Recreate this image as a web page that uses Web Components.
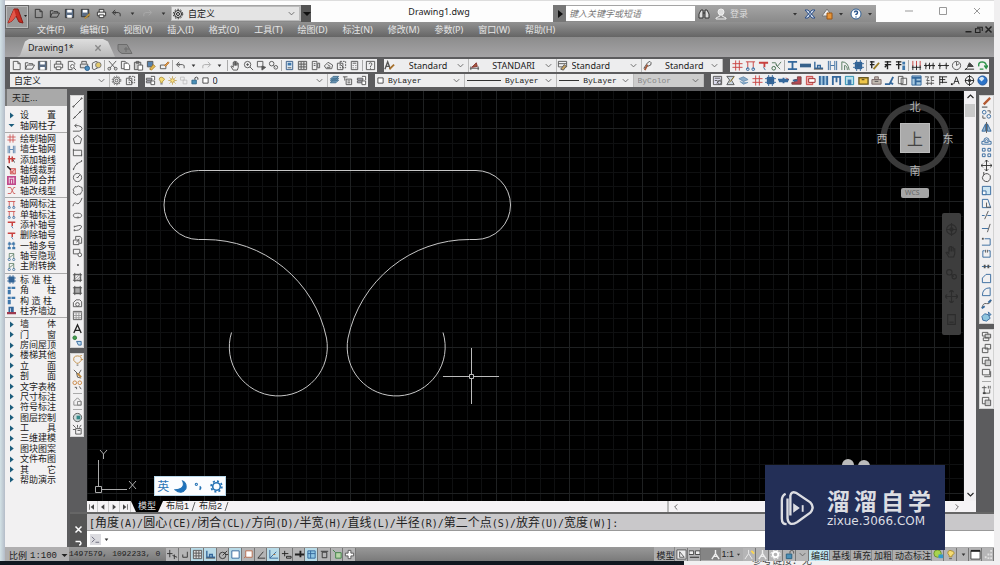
<!DOCTYPE html>
<html lang="zh-CN">
<head>
<meta charset="utf-8">
<title>Drawing1.dwg</title>
<style>
html, body { margin: 0; min-height: 100%; }
body {
  font: 9px/12px "Noto Sans", "Noto Sans CJK SC", sans-serif;
  color: #333; overflow: hidden;
  background: linear-gradient(90deg, #d3e2e6 0, #b4bcc8 5px, #f0eff0 6px);
}
</style>
</head>
<body>
<cad-app></cad-app>
<script>
/* Icons are drawn on a 12 x 12 grid; strokes default to the current colour. */
const R = 'stroke="#c8413f"', B = 'stroke="#34689c"', BF = 'fill="#3f78ac" stroke="none"', KF = 'fill="#444" stroke="none"';
const ICONS = {
  new: '<path d="M2.500 1.500h5l2.500 2.500v6.500h-7.500zM7.500 1.500v2.500h2.500"/>',
  open: '<path d="M1.500 10V3h3l1 1h4v1.500M1.500 10l2-4.500h8L9 10z"/>',
  save: '<path d="M1.500 1.500h9v9h-9z" fill="#5b6d85"/><path d="M3.500 2h5v3h-5zM3.500 7.500h5v3h-5z" fill="#fff" stroke="none"/>',
  saveas: '<path d="M1.500 1.500h8v8h-8z" fill="#5b6d85"/><path d="M3 2h5v3H3z" fill="#fff" stroke="none"/><path d="M5 11l5-5 1 1-5 4.500z" fill="#eac35a" stroke="#a67b2b"/>',
  print: '<path d="M3.500 4.500v-3h5v3M1.500 4.500h9v4h-9z" fill="#eee"/><path d="M3.500 7.500h5v3h-5z" fill="#fff"/>',
  preview: '<path d="M7 10.500H2.500v-9h5l2 2V5"/><circle cx="7" cy="7" r="2" fill="#fff"/><path d="M8.500 8.500l2.500 2.500"/>',
  publish: '<path d="M3 4V1.500h5V4M1.500 4.500h8v4h-8z" fill="#ddd"/><circle cx="9" cy="9" r="2.500" fill="#4b8fc0" stroke="#285f91"/>',
  dwf: '<path d="M1.500 3.500l4-2 2 1v6l-4 2-2-1z" fill="#eee"/><circle cx="8" cy="5.500" r="3" fill="#e2c96c" stroke="#777"/>',
  cut: '<path d="M2 1l7 8M10 1L3 9"/><circle cx="2.500" cy="9.500" r="1.500"/><circle cx="9.500" cy="9.500" r="1.500"/>',
  copy: '<path d="M1.500 1.500h4l2 2v6h-6z"/><path d="M4.500 3.500h4l2 2v5h-6z" fill="#fff"/>',
  paste: '<path d="M1.500 2.500h7v8h-7z" fill="#ccc"/><path d="M3.500 1.500h3v2h-3z"/><path d="M5.500 5.500h5v5.500h-5z" fill="#fff"/>',
  match: '<path d="M1.500 1.500h6v6h-6z" fill="#5782ad"/><path d="M4 10l4-5 2 2-4 4z" fill="#e8bf55" stroke="#a67b2b"/>',
  edit: '<path d="M1.500 5.500h6v4h-6z"/><path d="M6 6l4-4 1 1-4 4z" fill="#e9a856" stroke="#b5712b"/>',
  undo: '<path d="M4.500 2L1.500 5l3 3M2 5h6q3 0 2 4" /><path d="M4.500 3.500v3"/>',
  redo: '<path stroke="#aaa" d="M7.500 2l3 3-3 3M10 5H4Q1 5 2 9"/>',
  down: '<path d="M4 5h4L6 7.500z" fill="#333" stroke="none"/>',
  pan: '<path d="M3.500 11L1 7l1-.500 1.500 1.500V2.500h1V6 1.500h1.500V6 2h1.500v4V3.500H9V8l-1 3z"/>',
  zoomrt: '<circle cx="5" cy="5" r="3.500"/><path d="M7.500 7.500l3.500 3.500M3.500 5h3M5 3.500v3"/>',
  zoomwin: '<path d="M1.500 1.500h6v6h-6z"/><path d="M6.500 6.500l4 1.500-4 3z" fill="#555"/>',
  zoomprev: '<circle cx="4" cy="4" r="2.500"/><path d="M6 6l2 2"/><circle cx="8.500" cy="8" r="2"/>',
  props: '<path d="M2.500 1.500h7v9h-7z" fill="#dce8f2" stroke="#345a85"/><path d="M4 3h4v3H4z" '+BF+'/><path d="M4 8.500h4"/>',
  center: '<path d="M1.500 1.500h9v9h-9z" fill="#ddd"/><path d="M2 4.500h8M4.500 2v8M7.500 2v8M2 7.500h8"/>',
  tools: '<path d="M2.500 1.500h5v9h-5zM8.500 3.500h2v5h-2z"/><path d="M4 4h2M4 6h2"/>',
  sheet: '<path d="M1.500 6.500l4-4 5 3-1 4h-6z"/><path d="M4 8h4M5 5l3 2"/>',
  markup: '<path d="M1.500 3.500h6v7h-6z"/><path d="M4.500 1.500h6v7h-6z" stroke-dasharray="2 1"/><path d="M5 5l3 3"/>',
  calc: '<path d="M2.500 1.500h7v9h-7z"/><path d="M4 3.500h4M4 6h1M7 6h1M4 8.500h1M7 8.500h1"/>',
  help: '<path d="M1.500 1.500h9v9h-9z"/><path d="M4.500 4.500q0-1.500 1.500-1.500t1.500 1.500-1.500 2V8M6 9v1"/>',
  gear: '<circle cx="6" cy="6" r="1.500"/><circle cx="6" cy="6" r="3.500"/><circle cx="6" cy="6" r="4.700" stroke-dasharray="1.500 1.500"/>',
  layers: '<path d="M1.500 3.500h6v2h-6zM1.500 6.500h6v2h-6z" fill="#ccd"/><path d="M6.500 1.500h4v4M6.500 8v2.500h4v-4h-4z" fill="#fff"/>',
  laystack: '<path d="M1.500 8.500l3-3h6l-3 3zM1.500 6.500l3-3h6l-3 3zM1.500 4.500l3-3h6l-3 3z" fill="#7fa9c8" stroke="#3e6a8a"/>',
  layprev: '<path d="M1 2h5M3 2v4"/><path d="M4.500 4.500h6v6h-6z"/><path d="M6 6.500h3M6 8.500h3"/>',
  bulb: '<path d="M4.500 8.500v-1.500Q2 4.500 3.500 2.500T8.500 2.500 7.500 7v1.500z" fill="#f5dc75" stroke="#a78a2c"/><path d="M4.500 10.500h3"/>',
  sun: '<circle cx="6" cy="6" r="2.500" fill="#f7e089" stroke="#b58e26"/><path stroke="#b58e26" d="M6 .500v2M6 9.500v2M.500 6h2M9.500 6h2M2 2l1.500 1.500M8.500 8.500L10 10M10 2L8.500 3.500M3.500 8.500L2 10"/>',
  freeze: '<path stroke="#bbb" d="M2 1.500h5v4H2zM5.500 5.500h5v5h-5z"/>',
  unlock: '<path d="M2.500 5.500h6v5h-6z" fill="#4a8fb7" stroke="#285f80"/><path d="M6.500 5V2.500q2-2 4 0V5"/>',
  box: '<path d="M2.500 2.500h7v7h-7z" fill="#fff" stroke="#222"/>',
  style: '<path d="M1 10L4 2l3 8M2.500 7h3" stroke-width="1.500"/><path d="M6 10l5-5" stroke="#a6702c" stroke-width="2"/>',
  dimstyle: '<path d="M1 9h10M2 7v4M10 7v4"/><path d="M3 8l5-5 1 4z" fill="#a65a3b" stroke="#833"/>',
  tabstyle: '<path d="M1.500 1.500h9v6h-9zM1.500 4h9"/><path d="M4 10l4-5 2 2-3 4z" fill="#caa360"/>',
  mlstyle: '<path d="M2 9l4-6q3-3 4 0t-4 4z"/><path d="M3 11l3-6" stroke="#a65a3b" stroke-width="2"/>',
  axis: '<path '+R+' d="M4 .500v11M8 .500v11M.500 4h11M.500 8h11"/>',
  axis2: '<path '+R+' d="M1 2h10M3 2v6M9 2v6"/><path '+B+' d="M3 8v2M9 8v2"/><circle cx="3" cy="10" r="1.500" '+B+'/><circle cx="9" cy="10" r="1.500" '+B+'/>',
  axis3: '<path '+R+' stroke-width="2" d="M1 3h10M7 3v5"/><path '+B+' d="M6 8l2 3"/>',
  wallaxis: '<path '+B+' d="M1.500 1v10M3.500 1v10M8.500 1v10M10.500 1v10M4 6h4"/>',
  addaxis: '<path '+R+' stroke-width="2" d="M3 1v10M7 2v7M1 5h10"/><path d="M8 6l2 4"/>',
  clip: '<path d="M4.500 3.500h7v7h-7z" fill="#efb5b8" '+R+'/><path '+R+' d="M5 10l6-6M5 6l5 5"/><path d="M0 0l5 5" stroke="#222" stroke-width="2"/>',
  merge: '<path d="M0 0h12v12H0z" fill="#c04a8b" stroke="none"/><path stroke="#fff" d="M3 2v8M6 5v5M9 2v8M3 3h6"/>',
  linetype: '<path '+R+' d="M1 2h4l2 4-2 4H1M11 2H9L7 6l2 4h2"/>',
  heads: '<path '+B+' d="M3 1v7M9 1v7M1 4h10"/><path d="M1 8h4v3H1zM7 8h4v3H7zM2 2h3v3H2zM7 2h3v3H7z" '+BF+'/>',
  hide: '<path stroke="#54775d" d="M3 2v7M9 2v7M3 2h6M4 7l5-4"/><circle cx="3" cy="10" r="1.500" '+B+'/><circle cx="9" cy="10" r="1.500" '+B+'/>',
  snip: '<path stroke="#54775d" d="M1 3h4l2 4 4-5M5 5l5 5"/><circle cx="3" cy="9" r="2" stroke="#396845"/>',
  ibeam: '<path '+B+' stroke-width="2" d="M1 2h10M1 10h10M6 2v8"/>',
  wall: '<path d="M0 4h12v4H0z" fill="#37618a" stroke="none"/>',
  wall2: '<path d="M2 2v7h9M5 9V6h3v3" stroke-width="1.500" '+B+'/><path d="M1 10h10"/>',
  arcwall: '<path stroke="#54775d" d="M2 11V2q7 0 8 9M5 11V6q3 0 3 5"/>',
  column: '<path d="M2 2h8v8H2z" fill="#335f91" stroke="none"/><path '+B+' d="M4 0v12M8 0v12M0 4h12M0 8h12"/>',
  corner: '<path d="M1 1h4v3H1zM6 1h5v3H6zM1 5h4v6H1z" '+BF+'/>',
  align: '<path d="M0 8h12v3H0z" fill="#9e3a4f" stroke="none"/><path d="M3 8V2h3v6M8 1v7" stroke-width="2" '+B+'/>',
  text: '<path d="M3 2h7M6 1v9M3 5h7M3 8l3-3" stroke="#222" stroke-width="1.500"/>',
  text2: '<path d="M1 2h6M4 1v9M1 5h6" stroke="#222" stroke-width="1.500"/><path d="M8 2h3v3H8zM8 6h3v5H8z" '+BF+'/>',
  edittext: '<path d="M1 2h5M3 1v8M1 5h5" stroke="#222" stroke-width="1.500"/><path d="M5 10l6-7" stroke="#9a7b22" stroke-width="2"/>',
  dim3: '<path '+R+' d="M2 1v6M6 1v6M10 1v6"/><path d="M2 6v5M6 6v5M10 6v5M1 8h10" stroke="#222"/>',
  dim2: '<path stroke="#222" d="M2 3v7M6 3v7M10 3v7M0 6h12M1 5l2 2M5 5l2 2M9 5l2 2"/>',
  dim1: '<path stroke="#222" d="M2 3v7M9 3v7M0 6h12M1 5l2 2M8 5l2 2"/>',
  radius: '<circle cx="6" cy="6" r="4.500"/><path d="M6 6V2M6 6l3-2"/>',
  level: '<path stroke="#222" d="M1 10h10M4 7h6L6 3zM4 8l-3 3"/><path d="M4 7h6L6 3z" '+KF+'/>',
  refresh: '<path stroke="#2c9149" stroke-width="1.500" d="M2 7q-1-5 4-5 5 1 4 6M8 6l2 3 2-3M3 10h4"/>',
  sheet1: '<path d="M1.500 1.500h9v9h-9z" fill="#dde"/><path d="M3 3.500h6M3 6h3M5 9l5-4"/><circle cx="8" cy="8" r="2"/>',
  sheet2: '<path d="M2 1.500h8l-3 4 3 5H2l3-5z" fill="#cbd5df"/><path d="M5 8l5-6" stroke="#9a7b22"/>',
  cloudlay: '<path d="M1 4l5-2 5 3-5 2zM2 7l4 3 5-2" fill="#8badc9" stroke="#6b90b2"/>',
  pipe: '<path d="M0 5h12M1 7h10M6 3v6" '+B+' stroke-width="2"/><path d="M9 3l2 2" stroke="#922"/>',
  stair: '<path d="M1 10h10V2H7v3H4v3H1z" fill="#b84751" stroke="#744"/><path d="M2 6h5" '+B+' stroke-width="2"/>',
  room: '<path d="M1.500 1.500h7v9h-7z" fill="#eaa" '+R+'/><path d="M4 4h7v4H4z" fill="#fff" stroke="#922"/>',
  bars: '<path d="M1 1h10v10H1z" fill="#9ec4df" stroke="none"/><path '+B+' stroke-width="2" d="M2 1v10M6 1v10M10 1v10"/>',
  door: '<path '+B+' stroke-width="2" d="M2 11V2h8v9M6 2v6"/>',
  window: '<path fill="#bae1ec" stroke="#248bab" d="M1.500 1.500h9v9h-9z"/><path d="M4 5h4v6H4z" '+BF+'/>',
  ruler: '<path fill="#f0c74a" stroke="#6b5a24" stroke-width="1.500" d="M1 3h10v7H1zM4 5h3"/>',
  house: '<path d="M1 5h10v5H1zM4 2h4v3H4z" fill="#c4bcb3" stroke="#766"/><path d="M4 7h4"/>',
  mark: '<path d="M1 10h5l4-8M6 8l4 2" '+B+' stroke-width="2"/>',
  sheets: '<path d="M1.500 1.500h5v8h-5zM4.500 3.500h6v7h-6z" fill="#f3f3f3"/>',
  table2: '<path d="M1 1h10v10H1z" fill="#a9cbe1" '+B+'/><path '+B+' d="M1 3h10M5 3v8M5 7h6" stroke-width="2"/>',
  bolts: '<path d="M1 2h4l-2 4h3M7 2h4M8 2v4h3M2 9h9M4 7v4M8 7v4"/>',
  grid3: '<path stroke="#222" d="M3 1v10M3 2h8M3 5h6M3 8h8M6 2v7"/>',
  adot: '<path stroke="#222" d="M4 10L7 2l3 8M5 7h4"/><path d="M1 9h2v2H1z" fill="#222" stroke="none"/>',
  compass: '<circle cx="6" cy="6" r="4.500" stroke="#222"/><path stroke="#222" d="M6 0v12M1 6h10"/><circle cx="6" cy="6" r="1.500" fill="#222"/>',
  globe: '<circle cx="6" cy="6" r="5" fill="#2c73c8" stroke="#205396"/><path d="M2 4q4-4 6 0L5 7z" fill="#d7e9f8" stroke="none"/>',
  line: '<path d="M1.500 10.500l9-9"/><circle cx="1.500" cy="10.500" r=".7"/><circle cx="10.500" cy="1.500" r=".7"/>',
  xline: '<path d="M1 11L11 1"/><path d="M2.500 8.500l1 1M8 3l1 1" stroke-width="2"/>',
  pline: '<path d="M1 10h7q3-1 3-3T7 4H3l2-2M3 4l2 2"/>',
  polygon: '<path d="M6 1.500l4.500 3.500-1.500 5.500H3L1.500 5z"/>',
  rect: '<path d="M1.500 3.500h9v6h-9z"/><path d="M1 3h1M10 9h1" stroke-width="2"/>',
  arc: '<path d="M1.500 11Q3 4 10.500 1.500"/><path d="M1 10h1M5 4h1M10 1h1" stroke-width="2"/>',
  circle: '<circle cx="6" cy="6" r="4.500"/><path d="M6 6l3-3M5 6h2"/>',
  cloud: '<path d="M3 3q0-2 2-1 2-2 4 0 3 0 2 3 1 2-1 3 0 3-3 2-2 2-4 0-3-1-1-3-2-3 1-4z"/>',
  spline: '<path d="M1 10q1-5 4-3t6-6"/>',
  ellipse: '<ellipse cx="6" cy="6" rx="4.500" ry="2.500"/><path d="M6 8h1" stroke-width="2"/>',
  ellarc: '<path d="M2 9q6 1 8-3T3 5"/><path d="M2 5h1M2 9h1" stroke-width="2"/>',
  insert: '<path d="M1.500 5.500h6v5h-6zM4 5V1.500h5l1.500 2V9H8M5 8l3-4"/>',
  block: '<path d="M1.500 2.500h7v5h-7z"/><circle cx="8.500" cy="8.500" r="2" fill="#fff"/>',
  point: '<path d="M6 5h1v1H6z" fill="#333"/>',
  hatch: '<path d="M2.500 2.500h7v7h-7zM1 3h10M1 9h10M3 1v10M9 1v10"/><path stroke="#999" d="M3 8l5-5M5 9l4-4"/>',
  gradient: '<path d="M2.500 2.500h7v7h-7z" fill="#aaa"/><path d="M1 3h10M1 9h10M3 1v10M9 1v10"/>',
  region: '<path d="M1.500 9.500V5l3-3h4l2 2v5.500z"/><circle cx="6" cy="7" r="2"/>',
  table: '<path d="M1.500 1.500h9v9h-9z"/><path d="M1 3h10M4.500 3v7M7.500 3v7M2 6h8M2 8.500h8" stroke="#999"/>',
  bigA: '<path stroke="#222" stroke-width="1.500" d="M2 11L6 2l4 9M3 8h6"/>',
  addsel: '<circle cx="3" cy="3" r="2" fill="#47a051" stroke="#277433"/><path d="M5 7h5v4H7z" fill="#bcdcf0" '+B+'/>',
  bulbs: '<path d="M2 6q-1-5 4-5t4 5l-3 3H5z" stroke="#c08b3f"/><path d="M5 11h2"/><path d="M9 1l2-1M10 5h2" stroke="#c08b3f"/>',
  brush: '<path d="M2 2l5 5 3-5M5 5l1 5 4 1"/><path d="M6 6l4 4" stroke="#c08b3f" stroke-width="2"/>',
  dots: '<circle cx="3" cy="3" r="2" stroke="#c8843f"/><circle cx="8.500" cy="3" r="2" stroke="#c8843f"/><path d="M3 8h2v2M8 7l2 3"/>',
  lock: '<path d="M2 10V6l4-4 4 4v4zM6 6h4v4H6z" stroke="#888"/>',
  ball: '<circle cx="6" cy="6" r="4.500" fill="#ccd8d8"/><path d="M5 4h4v4H5z" fill="#388" stroke="none"/>',
  spark: '<path d="M4 5h6v6H4zM1 1l3 3M6 1v3M1 6h3M10 1L8 4M6 7h3"/>',
  erase: '<path d="M3 8l7-7" stroke="#b35831" stroke-width="2.500"/><path d="M1 11h6" stroke="#333"/>',
  copyobj: '<circle cx="3.500" cy="3.500" r="2" '+B+'/><circle cx="8.500" cy="8" r="2" '+B+'/><path d="M7 2h3v3M2 7v3h3"/>',
  mirror: '<path d="M5 2v8H1zM7 2v8h4z" fill="#9ab7cd" '+B+'/><path d="M6 0v12"/>',
  offset: '<path '+B+' d="M1 10h10V7H9Q9 3 6 3T3 7H1zM4 8h4q0-3-2-3T4 8z"/>',
  array: '<path '+B+' d="M1.500 1.500h3v3h-3zM7.500 1.500h3v3h-3zM1.500 7.500h3v3h-3zM7.500 7.500h3v3h-3z"/>',
  move: '<path d="M6 0v12M0 6h12M4 2l2-2 2 2M4 10l2 2 2-2M2 4L0 6l2 2M10 4l2 2-2 2" stroke="#333"/>',
  rotate: '<path d="M3 3q4-3 7 1 1 5-3 6.500-5 0-5.500-4.500L3 3V0" stroke="#444"/>',
  scale: '<path fill="#cde5f2" '+B+' d="M1.500 1.500h9v9h-9z"/><path fill="#fff" '+B+' d="M1.500 6.500h4v4h-4z"/>',
  stretch: '<path '+B+' d="M1.500 1.500h6l3 9h-9z"/><path d="M6 5v5h5"/>',
  trim: '<path '+B+' d="M1 6h3M7 6h4"/><path d="M4 10l4-9"/>',
  extend: '<path '+B+' d="M1 6h7"/><path d="M7 10l3-9"/>',
  break1: '<path '+B+' d="M1 10h9V3H4"/><path d="M1 3h2" stroke-width="2"/>',
  break2: '<path '+B+' d="M4 3H2v7h8V3H8"/><path d="M5 2v3M7 2v3"/>',
  join: '<path '+B+' d="M1 6h10"/><path d="M4 4v4M8 4v4" stroke-width="2"/>',
  chamfer: '<path '+B+' d="M1.500 10.500v-5l4-4h5v9z"/>',
  fillet: '<path '+B+' d="M1.500 10.500Q1.500 2 10 2v8.500z"/>',
  blend: '<path d="M1 10q1-6 5-5t5-4"/><path '+B+' d="M1 10l3-2M8 4l3-3" stroke-width="2"/>',
  explode: '<path '+B+' fill="#8ec5df" d="M1 6l3-3 4 1 2 4-4 3-4-1zM8 1l3 3-2 1z"/>',
  order1: '<path d="M1.500 1.500h6v4h-6z"/><path d="M4.500 3.500h6v4h-6z" fill="#ccc"/><path d="M2.500 7.500h6v3h-6z"/>',
  order2: '<path d="M4.500 1.500h6v5h-6z" fill="#eee"/><path d="M1.500 5.500h6v5h-6z"/>',
  order3: '<path d="M1.500 1.500h7v7h-7z"/><path d="M4.500 4.500h6v6h-6z" fill="#ccc"/>',
  order4: '<path d="M1.500 1.500h8v6h-8z"/><path d="M3.500 9.500h7v-6"/>',
  order5: '<path d="M3.500 2v8h6V6M1 4h5M8 2v3M10 2v3" /><path d="M2 9h3v2H2z" '+KF+'/>',
  snap: '<path stroke="#333" d="M3 1v8M0 5h6M6 7l5 2M8 6v5"/>',
  ortho: '<path stroke="#333" d="M8 3v6H3V6"/>',
  polar: '<circle cx="5" cy="7" r="3.500" stroke="#333"/><path stroke="#333" d="M5 7l5-5M8 6h3"/>',
  otrack: '<path stroke="#333" d="M10 10H2l6-7"/>',
  ducs: '<path '+B+' d="M2 1v9h9M2 10l7-7"/><path d="M6 6h2" stroke="#b73"/>',
  dyn: '<path stroke="#222" d="M1 5h7M4 2v6M6 8h5v2H6z"/>',
  plus: '<path stroke="#222" stroke-width="2" d="M1 6h10M7 2v7"/>',
  plusw: '<path fill="#fff" stroke="#555" d="M4.500 1.500h3v3h3v3h-3v3h-3v-3h-3v-3h3z"/>',
  qp: '<path stroke="#333" d="M3.500 3.500h5v6h-5zM2 2.500h8"/>',
  sc: '<path stroke="#3d7f45" fill="#b8d7a8" d="M4 4h6v6H4zM1 1l3 3"/>',
  osnap: '<path '+B+' fill="#fff" d="M2 2h8v8H2z"/>',
  osnap3: '<path stroke="#b86a4a" fill="#fff" d="M3 2h7v7H3zM1 10l2-2"/>',
  trans: '<path '+B+' fill="#8fc6e4" d="M2 2h8v8H2z"/><path '+B+' d="M2 5h8M5 2v8"/>',
  annot: '<path stroke="#eee" stroke-width="1.500" d="M6 1v4M6 5l-4 6M6 5l4 6M4 8h4"/>',
  annoy: '<path stroke="#eee" d="M5 1v4M5 5l-4 6M5 5l4 6"/><path stroke="#ffd84d" stroke-width="2" d="M8 2l3 3"/>',
  view: '<path fill="#eee" stroke="#555" d="M1 1h10v10H1z"/><path d="M4 3l5 6M4 3v6h5" stroke="#555"/>',
  split: '<path fill="#eee" stroke="#444" d="M0 2h5v4H0zM7 2h5v4H7z"/><path d="M1 9h10" stroke="#222"/>',
  wgear: '<circle cx="6" cy="6" r="3" stroke="#fff" stroke-width="2"/><circle cx="6" cy="6" r="5" stroke="#fff" stroke-dasharray="2 2"/>',
  hw: '<circle cx="5" cy="5" r="4" fill="#a8d34e" stroke="#69902a"/><path d="M6 6h5v4H6z" fill="#39c" stroke="none"/>',
  clean: '<path fill="#fff" stroke="#444" d="M1 2h10v9H1z"/><path stroke="#222" d="M1 2h10" stroke-width="2"/>',
  grip: '<path stroke="#e0e0e0" stroke-width="2" stroke-dasharray="2 2" d="M10 1v10M7 5v6M4 8v3"/>',
  find: '<path fill="#ddd" stroke="#333" d="M1 10V6l2-4h2v8zM7 10V2h2l2 4v4zM5 5h2"/>',
  user: '<circle cx="6" cy="4" r="3" fill="#ddd" stroke="#eee"/><path stroke="#eee" d="M5 7v1L1 10v1h10v-1L7 8V7"/>',
  exch: '<path d="M1 2h3l7 8H8zM8 2h3L4 10H1z" fill="#d6e2f2" stroke="#2c4e86"/>',
  tri: '<path fill="#eee" stroke="#777" d="M1 8h10L6 1z"/><path d="M6 5h5v6H6z" fill="#e79538" stroke="#9b5615"/>',
  about: '<circle cx="6" cy="6" r="5" fill="#fff" stroke="#315f93"/><path stroke="#2a568e" stroke-width="1.500" d="M4.500 4.500Q4.500 3 6 3t1.500 1.500T6 6.500V7M6 8.500v1"/>',
  play: '<path fill="#1c5d7c" stroke="none" d="M4 2l5 4-5 4z"/>',
  fold: '<path fill="#1c5d7c" stroke="none" d="M2 4h8L6 8z"/>',
  left: '<path stroke="#222" d="M8 2L4 6l4 4"/>', right: '<path stroke="#222" d="M4 2l4 4-4 4"/>',
  up: '<path stroke="#222" stroke-width="1.500" d="M2 8l4-4 4 4"/>', dn: '<path stroke="#222" stroke-width="1.500" d="M2 4l4 4 4-4"/>',
  first: '<path '+KF+' d="M9 2v8L4 6zM2 2h1v8H2z"/>', prev: '<path '+KF+' d="M8 2v8L3 6z"/>',
  next: '<path '+KF+' d="M4 2v8l5-4z"/>', last: '<path '+KF+' d="M3 2v8l5-4zM9 2h1v8H9z"/>',
  chev: '<path d="M3 4.500l3 3 3-3" stroke="#666"/>'
};
const icon = n => `<svg viewBox="0 0 12 12" aria-hidden="true">${ICONS[n] || ''}</svg>`;
const SVG_CSS = 'svg{display:block;fill:none;stroke:currentColor;stroke-width:1}';
const RESET = '*{box-sizing:border-box}button{font:inherit;color:inherit;border:0;padding:0;margin:0;background:none;display:block;text-align:left}' + SVG_CSS;

function define(name, css, html) {
  customElements.define(name, class extends HTMLElement {
    connectedCallback() {
      if (this.shadowRoot) return;
      const t = document.createElement('template');
      t.innerHTML = `<style>${RESET}${css}</style>` + (typeof html === 'function' ? html(this) : html);
      this.attachShadow({ mode: 'open' }).append(t.content.cloneNode(true));
    }
  });
}

/* A strip of tool buttons: names separated by spaces, "|" draws a divider, "*" marks a pressed one. */
define('tool-strip', `
:host{display:flex;align-items:center;color:#555;min-width:0}
:host([vertical]){flex-direction:column;background:#f1f0f1;border:1px solid #d2d2d2}
:host([fill]) button{flex:1 1 0}
button{display:grid;place-items:center;min-width:8px;height:12px}
:host([vertical]) button{width:100%;height:auto}
button svg{width:11px;height:11px}
button.s{flex:.6 1 0}
button.on{background:#b9dbe8;box-shadow:inset 0 0 0 1px #6f9db2}
:host([status]) button{height:13px;box-shadow:inset -1px 0 #777}
i{flex:none;width:1px;height:11px;margin:0 1px;background:#aaa}
:host([vertical]) i{width:9px;height:1px;margin:1px 0}
`, el => el.getAttribute('icons').trim().split(/\s+/).map(n => {
  if (n === '|') return '<i></i>';
  const on = n.startsWith('*'); n = n.replace('*', '');
  return `<button type="button" aria-label="${n}" class="${on ? 'on' : ''}${n === 'down' ? 's' : ''}">${icon(n)}</button>`;
}).join(''));

define('drop-list', `
:host{display:flex;align-items:center;min-width:0;background:#ededee;color:#222;height:100%;border-right:1px solid #bbb}
select{appearance:none;border:0;background:none;padding:0 0 0 var(--pad,4px);margin:0;font:inherit;color:inherit;flex:1;min-width:0;height:12px;line-height:12px;text-align:left}
select:disabled{opacity:1}
svg{width:11px;height:11px;flex:none;margin-right:2px}
`, el => `<slot></slot><select aria-label="${el.getAttribute('label')}" ${el.hasAttribute('off') ? 'disabled' : ''}><option>${el.getAttribute('value')}</option></select>${icon('chev')}`);

define('title-bar', `
:host{display:grid;grid-template-columns:306fr 242fr 323fr 118fr;height:22px;background:#fdfdfd;align-items:end;border-top:1px solid #ddd}
.bar{background:linear-gradient(#a5a5a5,#8a8a8a);height:17px;display:flex;align-items:center}
.quick{padding-left:26px}
.quick>tool-strip{flex:1;color:#333}
.ws{flex:0 0 130px;display:flex;height:15px;border:1px solid #bbb}
drop-list{flex:1;background:#e4e4e4}
.more{flex:none;width:10px;height:17px;background:#555;display:grid;place-items:center}
svg{width:12px;height:12px}
h1{font:9px/14px "Noto Sans",sans-serif;margin:0 0 3px;padding-left:14px;text-align:center;color:#222}
.exp{width:13px;height:17px;background:#777;display:grid;place-items:center;flex:none}
input{flex:1 1 128px;min-width:0;height:15px;border:0;margin:0;padding:0 3px;background:#fff;font:italic 9px/12px "Noto Sans CJK SC",sans-serif}
input::placeholder{color:#777;opacity:1}
.acct{flex:0 0 181px;display:flex;align-items:center;color:#333}
.acct button{width:17px;display:grid;place-items:center}
.acct .login{width:60px;color:#ddd;display:block;padding-left:1px}
.acct .sm{width:12px}
.win{display:flex;height:21px;align-items:center;justify-content:space-around;padding:0 0 2px 16px}
.win svg{stroke:#999}
`, `<div class="bar quick"><tool-strip fill icons="new open save saveas print undo down redo down"></tool-strip>
<div class="ws"><drop-list label="工作空间" value="自定义">${icon('gear')}</drop-list></div><button class="more" aria-label="更多">${icon('fold').replaceAll('#1c5d7c', '#111')}</button></div>
<h1>Drawing1.dwg</h1>
<div class="bar"><button class="exp" aria-label="展开">${icon('play').replace('#1c5d7c', '#111')}</button><input type="search" aria-label="搜索" placeholder="键入关键字或短语">
<div class="acct"><button aria-label="搜索">${icon('find')}</button><button aria-label="用户">${icon('user')}</button><button class="login">登录</button><button class="sm" aria-label="列表">${icon('down')}</button>
<button aria-label="交换">${icon('exch')}</button><button aria-label="应用">${icon('tri')}</button><button class="sm" aria-label="列表">${icon('down')}</button><button aria-label="帮助">${icon('about')}</button><button class="sm" aria-label="列表">${icon('down')}</button></div></div>
<div class="win"><button aria-label="最小化"><svg viewBox="0 0 12 12"><path d="M2 6h8"/></svg></button><button aria-label="最大化"><svg viewBox="0 0 12 12"><path d="M2.500 2.500h7v7h-7z"/></svg></button><button aria-label="关闭"><svg viewBox="0 0 12 12"><path d="M3 3l6 6M9 3L3 9"/></svg></button></div>`);

define('menu-bar', `
:host{display:flex;height:15px;align-items:center;padding-left:32px;gap:15px;background:linear-gradient(#929292,#656565);color:#e6e6e6;line-height:14px}
button{white-space:nowrap}
.mdi{margin-left:auto;display:flex;gap:1px;padding-right:1px}.mdi svg{width:9px;height:9px;stroke:#222;stroke-width:2}
`, ['文件(F)', '编辑(E)', '视图(V)', '插入(I)', '格式(O)', '工具(T)', '绘图(D)', '标注(N)', '修改(M)', '参数(P)', '窗口(W)', '帮助(H)'].map(t => `<button type="button">${t}</button>`).join('') +
`<div class="mdi"><button aria-label="最小化"><svg viewBox="0 0 12 12"><path d="M2 9h8"/></svg></button><button aria-label="还原"><svg viewBox="0 0 12 12"><path d="M2 5h6v5H2zM4 3h7v5" stroke-width="1.500"/></svg></button><button aria-label="关闭"><svg viewBox="0 0 12 12"><path d="M2 2l8 8M10 2l-8 8"/></svg></button></div>`);

define('doc-tabs', `
:host{display:flex;height:20px;align-items:end;padding-left:12px;background:linear-gradient(#8c8c8c,#a5a4a6)}
.tab{width:98px;height:18px;display:flex;align-items:center;justify-content:space-between;padding:0 13px 0 11px;background:linear-gradient(#dedede,#b9b9b9);clip-path:polygon(0 100%,3px 92%,8px 14%,12px 0,86px 0,91px 14%,98px 100%);color:#222}
.tab svg{width:8px;height:8px;stroke:#888;stroke-width:2}
.add{width:18px;height:16px}.add svg{width:18px;height:14px;stroke:#6c6c6c;fill:#8a8a8a}
`, `<div class="tab"><button>Drawing1*</button><button aria-label="关闭"><svg viewBox="0 0 12 12"><path d="M2 2l8 8M10 2l-8 8"/></svg></button></div><button class="add" aria-label="新图形"><svg viewBox="0 0 18 14"><path d="M3 2.500h9l5 9H7q-3-1-4-4zM9 7h5M11 5v5"/></svg></button>`);

define('tool-bars', `
:host{display:flex;flex-direction:column;gap:2px;padding:2px 5px;background:#5c5c5e}
.r{display:grid;column-gap:7px;height:13px}
.a{grid-template-columns:366fr 339fr 258fr}
.b{grid-template-columns:128fr 224fr 330fr 279fr}
.g{background:#efeff0;display:flex;align-items:center;min-width:0;height:13px}
.g>*{min-width:0}
tool-strip{flex:1}
.n{flex:none}
drop-list svg{width:9px;height:9px;flex:none;margin:0 1px}
.mono{font-family:"Liberation Mono",monospace;font-size:8px}
.dash{width:34px;height:1px;background:#333;margin-left:2px;flex:none}
.dash.sh{width:20px}
`, `<div class="r a"><div class="g"><tool-strip fill icons="new open save | print preview publish dwf | cut copy paste match edit | undo down redo down | pan zoomrt zoomwin zoomprev | props center tools sheet markup calc | help"></tool-strip></div>
<div class="g"><tool-strip class="n" icons="style"></tool-strip><drop-list style="flex:74;--pad:14px" label="文字样式" value="Standard"></drop-list><tool-strip class="n" icons="dimstyle"></tool-strip><drop-list style="flex:76;--pad:12px" label="标注样式" value="STANDARI"></drop-list><tool-strip class="n" icons="tabstyle"></tool-strip><drop-list style="flex:74;--pad:4px" label="表格样式" value="Standard"></drop-list><tool-strip class="n" icons="mlstyle"></tool-strip><drop-list style="flex:70;--pad:12px" label="多重引线样式" value="Standard"></drop-list></div>
<div class="g"><tool-strip fill icons="axis axis2 axis3 snip | ibeam wall wall2 wallaxis arcwall column | edittext text text2 | dim3 dim2 dim1 radius level refresh"></tool-strip></div></div>
<div class="r b"><div class="g"><drop-list style="flex:100" label="工作空间" value="自定义"></drop-list><tool-strip style="flex:28" fill icons="gear markup"></tool-strip></div>
<div class="g"><tool-strip class="n" icons="layers"></tool-strip><drop-list style="flex:1;--pad:2px" label="图层" value="0">${icon('bulb')}${icon('sun')}${icon('freeze')}${icon('unlock')}${icon('box')}</drop-list><tool-strip style="flex:0 0 40px" fill icons="laystack layprev layers"></tool-strip></div>
<div class="g mono"><drop-list style="flex:90;--pad:2px" label="颜色" value="ByLayer">${icon('box')}</drop-list><drop-list style="flex:92;--pad:4px" label="线型" value="ByLayer"><span class="dash"></span></drop-list><drop-list style="flex:76;--pad:4px" label="线宽" value="ByLayer"><span class="dash sh"></span></drop-list><drop-list off style="flex:70;background:#ccc;color:#888" label="打印样式" value="ByColor"></drop-list></div>
<div class="g"><tool-strip fill icons="sheet1 sheet2 cloudlay axis column pipe stair room bars door window ruler house mark sheets table2 bolts grid3 adot compass globe"></tool-strip></div></div>`);

const GROUPS = [
  [['play', '设 置'], ['fold', '轴网柱子']],
  [['axis', '绘制轴网'], ['wallaxis', '墙生轴网'], ['addaxis', '添加轴线'], ['clip', '轴线裁剪'], ['merge', '轴网合并'], ['linetype', '轴改线型']],
  [['axis2', '轴网标注'], ['axis2', '单轴标注'], ['axis3', '添补轴号'], ['axis3', '删除轴号'], ['heads', '一轴多号'], ['hide', '轴号隐现'], ['hide', '主附转换']],
  [['column', '标 准 柱'], ['corner', '角 柱'], ['corner', '构 造 柱'], ['align', '柱齐墙边']],
  ['墙 体', '门 窗', '房间屋顶', '楼梯其他', '立 面', '剖 面', '文字表格', '尺寸标注', '符号标注', '图层控制', '工 具', '三维建模', '图块图案', '文件布图', '其 它', '帮助演示'].map(t => ['play', t])
];
define('side-palette', `
:host{display:flex;flex-direction:column;background:#f2f1f2;color:#222;font-family:"Liberation Sans","Noto Sans CJK SC",sans-serif}
header{height:17px;background:#a9a9a9;border-left:2px solid #777;padding:2px 0 0 5px;line-height:14px;flex:none;margin-bottom:4px}
nav{display:flex;flex-direction:column;height:375px}
button{flex:1;display:flex;align-items:center;gap:4px;padding-left:2px;line-height:10px;min-height:0}
svg{width:9px;height:9px;flex:none;overflow:hidden}
span{width:36px;white-space:nowrap}
span.j{text-align-last:justify}
hr{border:0;height:1px;background:#aaa;margin:1px 0;flex:none}
`, '<header>天正...</header><nav>' + GROUPS.map(g => g.map(([i, t]) => `<button type="button">${icon(i)}<span class="${t.length === 3 ? 'j' : ''}">${t}</span></button>`).join('')).join('<hr>') + '</nav>');

define('view-compass', `
:host{display:block;width:78px;height:100px;color:#b5b5b5;font:11px/12px "Noto Sans CJK SC",sans-serif}
.ring{display:grid;grid-template:14px 50px 14px / 12px 54px 12px;place-items:center;width:78px;height:78px;background:radial-gradient(circle,#0000 28px,#3a3a3a 29px 34px,#0000 35px)}
.n,.s{grid-column:2}.n{grid-row:1}.s{grid-row:3}.w{grid-row:2;grid-column:1}.e{grid-row:2;grid-column:3}
.top{grid-area:2/2;width:30px;height:30px;background:#aaa;color:#444;font-size:16px;line-height:28px;text-align:center;box-shadow:inset 0 0 0 1px #bbb}
.wcs{margin:11px auto 0;width:28px;height:10px;border-radius:2px;background:#a5a5a5;color:#666;font:7px/10px "Noto Sans",sans-serif;padding-left:4px}
`, '<div class="ring"><span class="n">北</span><span class="w">西</span><button class="top">上</button><span class="e">东</span><span class="s">南</span></div><button class="wcs">WCS</button>');

define('drawing-canvas', `
:host{display:block;position:relative;background:#000;overflow:hidden}
.d{position:absolute;inset:0;width:100%;height:100%}
view-compass{position:absolute;right:10px;top:8px}
.nav{position:absolute;right:3px;top:122px;width:19px;height:122px;background:#3d3d3d;border-radius:2px;display:flex;flex-direction:column;justify-content:space-evenly;align-items:center}
.nav svg{width:13px;height:13px;stroke:#2c2c2c}
.ucs{position:absolute;left:6px;bottom:7px;width:48px;height:48px;stroke:#aaa}
.ime{position:absolute;left:67px;bottom:5px;width:72px;height:20px;display:flex;align-items:center;justify-content:space-around;background:#fbfdff;border:1px solid #b7d7ea;color:#2a74b4;font:12px/16px "Noto Sans CJK SC",sans-serif}
.ime svg{width:13px;height:13px;stroke:#2573b5}
`, `<svg class="d" role="img" aria-label="图形"><defs>
<pattern id="g" x="44" y="37" width="73" height="73" patternUnits="userSpaceOnUse"><path stroke="#0f1011" d="M15.500 0v73M29.500 0v73M44.500 0v73M58.500 0v73M0 15.500h73M0 29.500h73M0 44.500h73M0 58.500h73"/><path stroke="#1f2122" d="M.500 0v73M0 .500h73"/></pattern></defs>
<rect width="100%" height="100%" fill="url(#g)" stroke="none"/>
<g stroke="#c6c6c6"><path d="M118 148.500H111.500A34.500 34.500 0 0 1 111.500 79.500H389A34.500 34.500 0 0 1 389 148.500H382.500"/>
<path d="M118 148.500A124 124 0 0 1 239.500 247A49 49 0 1 1 144.500 241.500"/><path d="M382.500 148.500A124 124 0 0 0 261 247A49 49 0 1 0 356 241.500"/></g>
<path stroke="#bbb" d="M356 285.500h26M386 285.500h26M384.500 257v26M384.500 287v26M382.500 283.500h4v4h-4z"/></svg>
<view-compass></view-compass>
<div class="nav">${['compass', 'pan', 'zoomprev', 'move', 'props'].map(n => `<button aria-label="${n}">${icon(n).replace(/stroke="#\w+"/g, '').replace(/fill="#\w+"/g, 'fill="none"')}</button>`).join('')}</div>
<svg class="ucs" viewBox="0 0 48 48"><path d="M5.500 14v26M8 43.500h26M2.500 40.500h6v6h-6zM7 4l3.500 4 3.500-4M10.500 8v5M36 35l7 8M43 35l-7 8"/></svg>
<div class="ime"><button>英</button><button aria-label="月亮"><svg viewBox="0 0 12 12"><path d="M8 1q3 7-7 8 6 5 10-1 1-5-3-7z" fill="#1c72bd"/></svg></button><button aria-label="标点"><svg viewBox="0 0 12 12"><circle cx="4" cy="4" r="1"/><path d="M7 6q2 1 0 3" stroke-width="1.500"/></svg></button><button aria-label="设置"><svg viewBox="0 0 12 12"><circle cx="6" cy="6" r="3.500" stroke-width="1.500"/><circle cx="6" cy="6" r="5" stroke-dasharray="1.900 2" stroke-width="1.500"/></svg></button></div>`);

define('layout-tabs', `
:host{display:flex;height:11px;background:#f5f3f5;color:#222;align-items:stretch;line-height:11px;font-family:"Liberation Sans","Noto Sans CJK SC",sans-serif}
.n{width:11px;display:grid;place-items:center;border-right:1px solid #ccc}.n svg,.h svg{width:8px;height:8px}
.m{background:#000;color:#ddd;width:32px;padding-left:7px;clip-path:polygon(0 0,100% 0,27px 100%,5px 100%)}
.t{padding-left:3px;width:33px;display:flex;justify-content:space-between;white-space:nowrap}
.t svg{width:5px;height:11px;stroke:#666}
.h{margin-left:auto;width:309px;max-width:40%;border-left:2px solid #bbb;display:flex;justify-content:space-between;align-items:center;padding:0 15px 0 3px}
`, ['first', 'prev', 'next', 'last'].map(n => `<button class="n" aria-label="${n}">${icon(n)}</button>`).join('') +
`<button class="m">模型</button>` + ['布局1', '布局2'].map(t => `<button class="t">${t}<svg viewBox="0 0 5 11"><path d="M4 1L1 10"/></svg></button>`).join('') +
`<div class="h"><button aria-label="向左">${icon('left')}</button><button aria-label="向右">${icon('right')}</button></div>`);

const PROMPT = '[角度(A)/圆心(CE)/闭合(CL)/方向(D)/半宽(H)/直线(L)/半径(R)/第二个点(S)/放弃(U)/宽度(W)]:';
define('command-line', `
:host{display:grid;grid-template-columns:17px 1fr;height:35px;background:#555;border-top:2px solid #666}
.k{display:flex;flex-direction:column;justify-content:space-between;align-items:center;padding:11px 0 1px}
.k svg{width:9px;height:9px;stroke:#fff;stroke-width:2}
p{margin:0;height:17px;background:#c9c8ca;color:#222;font:10px/17px "DejaVu Sans Mono",monospace;padding-left:2px;white-space:nowrap;overflow:hidden;border-bottom:1px solid #999}
p b{font:12px/16px "Noto Sans CJK SC",sans-serif}
label{display:flex;align-items:center;height:16px;background:#fff;padding-left:3px}
label svg{width:11px;height:11px;background:#dcdce0}label svg+svg{background:none}
input{border:0;flex:1;font:11px/14px "DejaVu Sans Mono",monospace;height:14px;padding:0 4px;background:none;outline:0}
`, `<div class="k"><svg viewBox="0 0 12 12"><path d="M2 2l8 8M10 2l-8 8"/></svg><svg viewBox="0 0 12 12"><path d="M2 6h6q3 3-1 5"/></svg></div>
<div><p>${PROMPT.replace(/[\u4e00-\u9fff]+/g, '<b>$&</b>')}</p><label aria-label="命令"><svg viewBox="0 0 12 12"><path d="M2 3l3 3-3 3M6 9h4" stroke="#667"/></svg>${icon('down')}<input aria-label="命令"></label></div>`);

define('status-bar', `
:host{display:flex;height:14px;align-items:center;background:linear-gradient(#999,#7a7a7a);color:#222;line-height:10px;font-family:"Liberation Sans","Noto Sans CJK SC",sans-serif}
.sc{width:64px;padding:3px 0 0 4px;background:#b0afb0;height:14px;white-space:nowrap;display:flex;align-items:center;gap:3px}
.sc svg{width:9px;height:9px}
.sc span,.xy{font-family:"Liberation Mono",monospace}
.xy{width:97px;font-size:8px;white-space:nowrap}
tool-strip{background:#b5b5b6}
.a{flex:0 0 190px}
.r{margin-left:auto;display:flex;align-items:center;background:#adadae;height:14px;white-space:nowrap}
.r svg{width:9px;height:9px}
.r button{height:14px}
.r button.t{padding:4px 1px 0 2px;box-shadow:inset -1px 0 #888}
.r button.on{background:#bfe7f3}
.v{width:26px}.w{width:20px;justify-content:flex-end;background:#858585}.x{width:66px}.y{width:62px}
.z{display:flex;align-items:center}
`, `<button class="sc">比例<span>1:100</span>${icon('fold').replace('#1c5d7c', '#222')}</button><span class="xy">1497579, 1092233, 0</span>
<tool-strip class="a" fill status icons="snap ortho *center *wall2 polar *osnap osnap3 otrack *ducs dyn plus *trans qp sc plusw"></tool-strip>
<div class="r"><button class="t">模型</button><tool-strip status fill class="v" icons="view split"></tool-strip><tool-strip class="w" icons="annot"></tool-strip><button class="z">1:1${icon('down')}</button><tool-strip status fill class="x" icons="annoy annot wgear unlock chev"></tool-strip>
<button class="t on">编组</button><button class="t">基线</button><button class="t">填充</button><button class="t">加粗</button><button class="t">动态标注</button><tool-strip status fill class="y" icons="hw bulb down clean grip"></tool-strip></div>`);

define('brand-card', `
:host{display:flex;align-items:center;gap:12px;width:180px;height:85px;padding-left:14px;background:#232f57;color:#dcdde2}
*{box-sizing:border-box}
svg{width:36px;height:36px;stroke:#dcdde2;flex:none}
div{width:104px}
strong{display:block;font:bold 23px/26px "Liberation Sans","Noto Sans CJK SC",sans-serif;text-align-last:justify;text-justify:inter-character}
small{display:block;font:12px/12px "DejaVu Sans",sans-serif}
`, `<svg viewBox="0 0 36 38"><path d="M6 4Q2 6 2 11v19q0 6 5 6M11 27V6q1-5 6-3l15 10q5 5 0 11L18 34q-9 5-10-4V9" stroke-width="2.500"/><path d="M14 14l7 5-7 5z" fill="#dcdde2" stroke="none"/><path d="M24 16v7" stroke-width="2"/></svg><div><strong>溜溜自学</strong><small>zixue.3066.COM</small></div>`);

define('cad-app', `
:host{display:flex;flex-direction:column;min-height:100vh;position:relative}
.win{flex:1;display:flex;flex-direction:column;margin:0 6px 0 5px;background:#5c5c5e;position:relative}
.logo{position:absolute;left:0;top:5px;width:24px;height:24px;background:#9a9a9a;border:1px solid #666;box-shadow:inset 0 0 0 1px #bbb}
.logo svg{width:22px;height:22px}
.body{flex:1;display:grid;grid-template-columns:62px minmax(0,1fr);column-gap:3px}
.right{display:flex;flex-direction:column;min-width:0}
.work{flex:1;display:grid;grid-template-columns:14px minmax(0,1fr) 15px;gap:0 3px;padding-top:2px}
.dock{display:flex;flex-direction:column;gap:5px;padding-top:4px}
.mid{display:flex;flex-direction:column;min-width:0}
.view{flex:1;display:grid;grid-template-columns:minmax(0,1fr) 12px}
.vs{background:#f2f0f2;display:flex;flex-direction:column;align-items:center;padding:1px 0 2px}
.vs svg{width:9px;height:9px}.vs i{width:10px;height:13px;background:#c9c9c9;margin:3px 0 auto}
.desk{height:4px;display:flex;justify-content:flex-end;background:linear-gradient(90deg,#111820 684px,#f1f0f1 684px);overflow:hidden}
.desk span{width:248px;font:10px/10px "Liberation Sans","Noto Sans CJK SC",sans-serif;color:#444;margin-top:-5px}
.bub{position:absolute;right:129px;bottom:93px;width:30px;height:14px}
brand-card{position:absolute;right:55px;bottom:15px}
`, `<div class="win"><title-bar></title-bar><menu-bar></menu-bar><doc-tabs></doc-tabs><tool-bars></tool-bars>
<div class="body"><side-palette></side-palette><div class="right"><div class="work">
<div class="dock"><tool-strip vertical style="height:253px" fill icons="line xline pline polygon rect arc circle cloud spline ellipse ellarc insert block point hatch gradient region table bigA addsel"></tool-strip><tool-strip vertical style="height:84px" fill icons="bulbs brush dots | lock | ball spark"></tool-strip></div>
<div class="mid"><div class="view"><drawing-canvas></drawing-canvas><div class="vs">${icon('up')}<i></i>${icon('dn')}</div></div><layout-tabs></layout-tabs></div>
<div class="dock"><tool-strip vertical style="height:229px" fill icons="erase copyobj mirror offset array move rotate scale stretch trim extend break1 break2 join chamfer fillet blend explode"></tool-strip><tool-strip vertical style="height:80px" fill icons="order1 order2 order3 order4 | order5 order3"></tool-strip></div>
</div><command-line></command-line></div></div><status-bar></status-bar>
<button class="logo" aria-label="应用程序菜单"><svg viewBox="0 0 22 22"><path d="M2 17L8 3h4l5 14-4-1-3-6-4 5z" fill="#c42d22" stroke="#8b1b14"/><path d="M8 3l2 7-4 5-4 2z" fill="#e2584a" stroke="none"/><path d="M18 9h3l-1.500 2z" fill="#222" stroke="none"/></svg></button></div>
<div class="desk"><span>参考链接：无</span></div>
<svg class="bub" viewBox="0 0 30 14"><circle cx="7" cy="7" r="6" fill="#bbb" stroke="none"/><circle cx="23" cy="8" r="6" fill="#bbb" stroke="none"/></svg>
<brand-card></brand-card>`);
</script>
</body>
</html>
